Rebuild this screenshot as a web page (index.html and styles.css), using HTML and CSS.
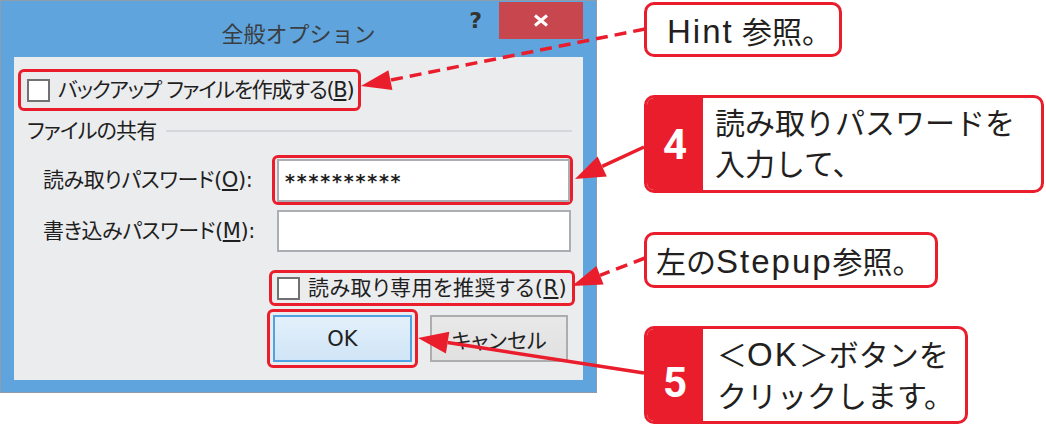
FILE: index.html
```html
<!DOCTYPE html>
<html lang="ja">
<head>
<meta charset="utf-8">
<title>全般オプション</title>
<link rel="stylesheet" href="styles.css">
</head>
<body>
<div class="page">
  <div class="window">
    <div class="titlebar">
      <div class="tb-left"></div>
      <div class="title">全般オプション</div>
      <div class="tb-right">
        <span class="help">?</span>
        <span class="close"><svg width="16" height="13" viewBox="0 0 16 13"><path d="M2 1.5L14 11.5M14 1.5L2 11.5" stroke="#fff" stroke-width="3" fill="none"/></svg></span>
      </div>
    </div>
    <div class="content">
      <div class="row-backup">
        <label class="mark chk-mark"><span class="checkbox"></span><span class="ctext ct-backup">バックアップ ファイルを作成する(<u>B</u>)</span></label>
      </div>
      <div class="group"><span class="gtext">ファイルの共有</span><span class="sep"></span></div>
      <div class="field-row row-o">
        <span class="flabel">読み取りパスワード(<u>O</u>):</span>
        <span class="mark in-mark"><input class="textbox tb1" type="text" value="**********"></span>
      </div>
      <div class="field-row row-m">
        <span class="flabel">書き込みパスワード(<u>M</u>):</span>
        <input class="textbox tb2" type="text" value="">
      </div>
      <div class="row-ro">
        <label class="mark chk-mark ro-mark"><span class="checkbox"></span><span class="ctext ct-ro">読み取り専用を推奨する(<u>R</u>)</span></label>
      </div>
      <div class="buttons">
        <span class="mark btn-mark"><button class="btn ok">OK</button></span>
        <button class="btn cancel">キャンセル</button>
      </div>
    </div>
  </div>

  <div class="callouts">
    <div class="note hint"><span class="ntext"><span class="lat">Hint</span> 参照。</span></div>
    <div class="step s4"><div class="num">4</div><div class="stext">読み取りパスワードを<br>入力して、</div></div>
    <div class="note stepup"><span class="ntext">左の<span class="lat">Stepup</span>参照。</span></div>
    <div class="step s5"><div class="num">5</div><div class="stext">＜<span class="lat">OK</span>＞ボタンを<br>クリックします。</div></div>
  </div>

  <svg class="arrows" width="1046" height="426" viewBox="0 0 1046 426">
    <g stroke="#ea1d2c" stroke-width="3.5" fill="none">
      <line x1="645" y1="29" x2="390.4" y2="80.1" stroke-dasharray="12 7"/>
      <line x1="644" y1="147" x2="602.2" y2="166.4"/>
      <line x1="645" y1="258" x2="600" y2="275.3" stroke-dasharray="12 7"/>
      <line x1="644" y1="373" x2="447.6" y2="342.6"/>
    </g>
    <g fill="#ea1d2c">
      <polygon points="361,86 392.4,89.9 388.4,70.3"/>
      <polygon points="575,179 606.8,176.4 597.6,156.4"/>
      <polygon points="572,286 603.6,284.6 596.4,266"/>
      <polygon points="418,338 445.9,353.5 449.3,331.7"/>
    </g>
  </svg>
</div>
</body>
</html>
```

FILE: styles.css
```css
html, body {
  margin: 0;
  padding: 0;
  background: #ffffff;
}

.page {
  position: relative;
  width: 1046px;
  height: 426px;
  display: flex;
  align-items: flex-start;
  overflow: hidden;
}

/* ---------- dialog window ---------- */
.window {
  width: 597px;
  height: 393px;
  box-sizing: border-box;
  border: 1px solid #8f9cab;
  background: #5fa4dc;
  padding: 0 13px 12px 13px;
  display: flex;
  flex-direction: column;
  font-family: "DejaVu Sans", "Noto Sans CJK JP", sans-serif;
  color: #1f1f1f;
}

.titlebar {
  height: 56px;
  flex: none;
  display: grid;
  grid-template-columns: 1fr auto 1fr;
  align-items: start;
}

.title {
  margin-top: 16px;
  font-family: "Noto Sans CJK JP", sans-serif;
  font-size: 22px;
  line-height: 30px;
  color: #3a3d42;
}

.tb-right {
  justify-self: end;
  display: flex;
  align-items: flex-start;
}

.help {
  margin-top: 7px;
  margin-right: 17px;
  font-family: "DejaVu Sans", sans-serif;
  font-weight: bold;
  font-size: 22px;
  line-height: 26px;
  color: #333;
}

.close {
  margin-top: 1px;
  width: 84px;
  height: 37px;
  background: #c8474f;
  display: flex;
  align-items: center;
  justify-content: center;
}

.content {
  flex: 1;
  background: #ebecee;
  padding-top: 12px;
  font-size: 21px;
  font-feature-settings: "palt";
}

.mark {
  border: 3px solid #ea1d2c;
  border-radius: 6px;
  box-sizing: border-box;
  display: inline-flex;
  align-items: center;
}

.checkbox {
  width: 23px;
  height: 23px;
  box-sizing: border-box;
  border: 2px solid #717171;
  background: #fff;
  flex: none;
}

.ctext {
  margin-left: 8px;
  line-height: 26px;
  white-space: nowrap;
}

.ct-backup {
  letter-spacing: -1.3px;
}

.ct-ro {
  letter-spacing: 0.5px;
}

.row-backup {
  padding-left: 4px;
}

.chk-mark {
  height: 42px;
  padding: 0 5px 0 6px;
}

.group {
  margin-top: 8px;
  height: 24px;
  display: flex;
  align-items: center;
  padding-left: 13px;
  padding-right: 11px;
}

.gtext {
  line-height: 24px;
  white-space: nowrap;
  letter-spacing: -0.8px;
}

.sep {
  flex: 1;
  height: 2px;
  background: #d5d7da;
  margin-left: 10px;
}

.field-row {
  display: flex;
  align-items: center;
  padding-left: 29px;
}

.flabel {
  width: 229px;
  flex: none;
  white-space: nowrap;
  line-height: 26px;
  letter-spacing: -0.4px;
}

.row-o {
  margin-top: 12px;
}

.in-mark {
  padding: 1px 0 0 2px;
}

.textbox {
  display: block;
  box-sizing: border-box;
  border: 2px solid #abadb3;
  background: #fff;
  margin: 0;
  padding: 0 6px;
  font-family: "DejaVu Sans", "Noto Sans CJK JP", sans-serif;
  font-size: 19px;
  color: #1f1f1f;
  outline: none;
}

.tb1 {
  width: 293px;
  height: 43px;
  letter-spacing: 1.8px;
  font-weight: bold;
}

.row-m {
  margin-top: 5px;
}

.tb2 {
  width: 294px;
  height: 42px;
  margin-left: 5px;
}

.row-ro {
  margin-top: 18px;
  padding-left: 255px;
}

.ro-mark {
  height: 36px;
  padding: 0 5px 0 5px;
}

.buttons {
  margin-top: 3px;
  display: flex;
  align-items: center;
  padding-left: 253px;
}

.btn-mark {
  padding: 3px;
}

.btn {
  margin: 0;
  box-sizing: border-box;
  height: 47px;
  font-family: "DejaVu Sans", "Noto Sans CJK JP", sans-serif;
  font-size: 21px;
  font-feature-settings: "palt";
  color: #1f1f1f;
  padding: 0;
}

.ok {
  width: 139px;
  border: 2px solid #4fa2e3;
  background: linear-gradient(#e3f0fb, #d0e5f7);
}

.cancel {
  width: 138px;
  margin-left: 12px;
  border: 2px solid #adadad;
  background: linear-gradient(#e8e8e8, #e1e1e1);
}

/* ---------- callouts ---------- */
.callouts {
  margin-left: 47px;
  padding-top: 2px;
  display: flex;
  flex-direction: column;
  align-items: flex-start;
  font-family: "Liberation Sans", "Noto Sans CJK JP", sans-serif;
  font-size: 30px;
  color: #231f20;
}

.lat {
  font-size: 33px;
  letter-spacing: 2px;
}

.note {
  box-sizing: border-box;
  border: 3px solid #ea1d2c;
  border-radius: 10px;
  background: #fff;
  display: flex;
  align-items: center;
  white-space: nowrap;
}

.ntext {
  white-space: pre;
}

.hint {
  width: 198px;
  height: 55px;
  padding-left: 20px;
}

.stepup {
  margin-top: 39px;
  width: 294px;
  height: 56px;
  padding-left: 9px;
}

.step {
  box-sizing: border-box;
  border: 3px solid #ea1d2c;
  border-radius: 10px;
  background: #fff;
  display: flex;
  height: 98px;
  overflow: hidden;
}

.s4 {
  margin-top: 38px;
  width: 400px;
}

.s5 {
  margin-top: 38px;
  width: 324px;
}

.num {
  width: 56px;
  flex: none;
  background: #ea1d2c;
  color: #fff;
  font-family: Roboto, "Liberation Sans", sans-serif;
  font-weight: bold;
  font-size: 42px;
  display: flex;
  align-items: center;
  justify-content: center;
}

.s5 .num {
  padding-top: 14px;
  box-sizing: border-box;
}

.stext {
  padding-left: 12px;
  line-height: 41px;
  align-self: center;
  white-space: nowrap;
}

.s5 .stext {
  padding-left: 14px;
}

/* ---------- annotation arrows ---------- */
.arrows {
  position: absolute;
  left: 0;
  top: 0;
  pointer-events: none;
}
```
